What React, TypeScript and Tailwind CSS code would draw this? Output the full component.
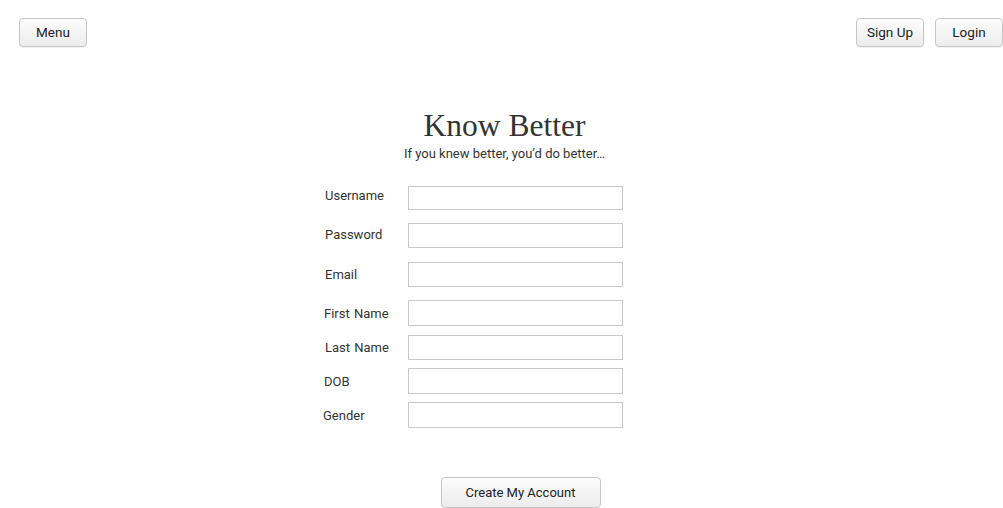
import React from "react";

const btn =
  "h-[29px] w-[68px] rounded-[4px] border border-[#c6c6c6] bg-gradient-to-b from-[#fdfdfd] to-[#ececec] text-[13.5px] text-[#222] shadow-[0_1px_1px_rgba(0,0,0,0.06)]";

const rows: { label: string; mt: number; h: number; lx: number; ly: number }[] = [
  { label: "Username", mt: 0, h: 24, lx: 2, ly: -4 },
  { label: "Password", mt: 13, h: 25, lx: 2, ly: -1 },
  { label: "Email", mt: 14, h: 25, lx: 2, ly: 0 },
  { label: "First Name", mt: 13, h: 26, lx: 1, ly: 1 },
  { label: "Last Name", mt: 9, h: 25, lx: 2, ly: 0 },
  { label: "DOB", mt: 8, h: 26, lx: 1, ly: 1 },
  { label: "Gender", mt: 8, h: 26, lx: 0, ly: 1 },
];

export default function App() {
  return (
    <div
      className="w-[1003px] h-[508px] bg-white text-[#333] overflow-hidden"
      style={{ fontFamily: "Roboto, 'Noto Sans', sans-serif" }}
    >
      <div className="flex justify-between pt-[18px] pl-[19px] pr-0">
        <button className={btn}>Menu</button>
        <div className="flex gap-[11px]">
          <button className={btn}>Sign Up</button>
          <button className={btn}>Login</button>
        </div>
      </div>

      <div className="flex flex-col items-center mt-[61px] pl-[6px]">
        <h1
          className="text-[31.5px] leading-[36px] text-[#333]"
          style={{ fontFamily: "'Liberation Serif', serif" }}
        >
          Know Better
        </h1>
        <p className="text-[13px] leading-[16px] mt-[2px] text-[#333]">
          If you knew better, you’d do better…
        </p>
      </div>

      <div className="ml-[323px] mt-[24px] w-[300px]">
        {rows.map((r) => (
          <div
            key={r.label}
            className="flex items-center"
            style={{ marginTop: r.mt }}
          >
            <label
              className="w-[85px] text-[13px] text-[#333] whitespace-pre [word-spacing:1px]"
              style={{ paddingLeft: r.lx, marginTop: r.ly }}
            >
              {r.label}
            </label>
            <input
              className="w-[215px] border border-[#c8c8c8] bg-white outline-none"
              style={{ height: r.h }}
            />
          </div>
        ))}
      </div>

      <div className="flex justify-center mt-[49px] pl-[38px]">
        <button className="h-[31px] w-[160px] rounded-[4px] border border-[#c6c6c6] bg-gradient-to-b from-[#fdfdfd] to-[#ececec] text-[13px] text-[#222]">
          Create My Account
        </button>
      </div>
    </div>
  );
}
